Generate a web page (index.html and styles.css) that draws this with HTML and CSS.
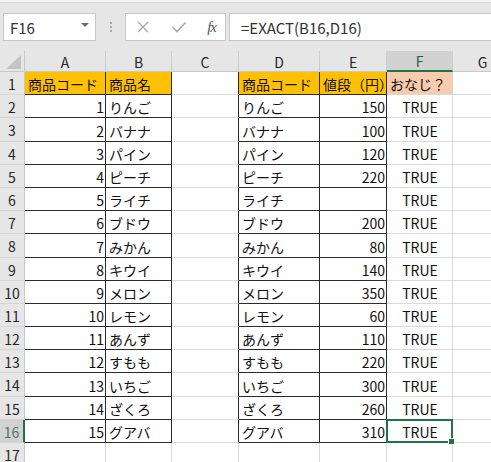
FILE: index.html
```html
<!DOCTYPE html>
<html lang="ja">
<head>
<meta charset="utf-8">
<link rel="stylesheet" href="styles.css">
</head>
<body>
<div class="app">
  <div class="edge"></div>
  <div class="fbar">
    <div class="namebox"><span class="ref">F16</span><span class="caret"></span></div>
    <div class="dots"><i></i><i></i><i></i></div>
    <div class="fbtns">
      <svg class="ico" width="14" height="14" viewBox="0 0 14 14"><path d="M2 2 L12 12 M12 2 L2 12" stroke="#a8a8a8" stroke-width="1.3" fill="none"/></svg>
      <svg class="ico" width="16" height="14" viewBox="0 0 16 14"><path d="M1.5 7 L6 11.5 L14.5 2.5" stroke="#a8a8a8" stroke-width="1.6" fill="none"/></svg>
      <span class="fx">fx</span>
    </div>
    <div class="finput">=EXACT(B16,D16)</div>
  </div>
  <div class="sheet">
    <div class="corner"><span class="tri"></span></div>
    <div class="ch">A</div><div class="ch">B</div><div class="ch">C</div><div class="ch">D</div><div class="ch">E</div><div class="ch sel">F</div><div class="ch">G</div>

    <div class="rh">1</div><div class="c org bk-r bk-b">商品コード</div><div class="c org bk-r bk-b">商品名</div><div class="c bk-r"></div><div class="c org bk-r bk-b">商品コード</div><div class="c org bk-r bk-b">値段（円）</div><div class="c pch">おなじ？</div><div class="c"></div>
    <div class="rh">2</div><div class="c num bk-r bk-b">1</div><div class="c bk-r bk-b">りんご</div><div class="c bk-r"></div><div class="c bk-r bk-b">りんご</div><div class="c num bk-r bk-b">150</div><div class="c ctr">TRUE</div><div class="c"></div>
    <div class="rh">3</div><div class="c num bk-r bk-b">2</div><div class="c bk-r bk-b">バナナ</div><div class="c bk-r"></div><div class="c bk-r bk-b">バナナ</div><div class="c num bk-r bk-b">100</div><div class="c ctr">TRUE</div><div class="c"></div>
    <div class="rh">4</div><div class="c num bk-r bk-b">3</div><div class="c bk-r bk-b">パイン</div><div class="c bk-r"></div><div class="c bk-r bk-b">パイン</div><div class="c num bk-r bk-b">120</div><div class="c ctr">TRUE</div><div class="c"></div>
    <div class="rh">5</div><div class="c num bk-r bk-b">4</div><div class="c bk-r bk-b">ピーチ</div><div class="c bk-r"></div><div class="c bk-r bk-b">ピーチ</div><div class="c num bk-r bk-b">220</div><div class="c ctr">TRUE</div><div class="c"></div>
    <div class="rh">6</div><div class="c num bk-r bk-b">5</div><div class="c bk-r bk-b">ライチ</div><div class="c bk-r"></div><div class="c bk-r bk-b">ライチ</div><div class="c num bk-r bk-b"></div><div class="c ctr">TRUE</div><div class="c"></div>
    <div class="rh">7</div><div class="c num bk-r bk-b">6</div><div class="c bk-r bk-b">ブドウ</div><div class="c bk-r"></div><div class="c bk-r bk-b">ブドウ</div><div class="c num bk-r bk-b">200</div><div class="c ctr">TRUE</div><div class="c"></div>
    <div class="rh">8</div><div class="c num bk-r bk-b">7</div><div class="c bk-r bk-b">みかん</div><div class="c bk-r"></div><div class="c bk-r bk-b">みかん</div><div class="c num bk-r bk-b">80</div><div class="c ctr">TRUE</div><div class="c"></div>
    <div class="rh">9</div><div class="c num bk-r bk-b">8</div><div class="c bk-r bk-b">キウイ</div><div class="c bk-r"></div><div class="c bk-r bk-b">キウイ</div><div class="c num bk-r bk-b">140</div><div class="c ctr">TRUE</div><div class="c"></div>
    <div class="rh">10</div><div class="c num bk-r bk-b">9</div><div class="c bk-r bk-b">メロン</div><div class="c bk-r"></div><div class="c bk-r bk-b">メロン</div><div class="c num bk-r bk-b">350</div><div class="c ctr">TRUE</div><div class="c"></div>
    <div class="rh">11</div><div class="c num bk-r bk-b">10</div><div class="c bk-r bk-b">レモン</div><div class="c bk-r"></div><div class="c bk-r bk-b">レモン</div><div class="c num bk-r bk-b">60</div><div class="c ctr">TRUE</div><div class="c"></div>
    <div class="rh">12</div><div class="c num bk-r bk-b">11</div><div class="c bk-r bk-b">あんず</div><div class="c bk-r"></div><div class="c bk-r bk-b">あんず</div><div class="c num bk-r bk-b">110</div><div class="c ctr">TRUE</div><div class="c"></div>
    <div class="rh">13</div><div class="c num bk-r bk-b">12</div><div class="c bk-r bk-b">すもも</div><div class="c bk-r"></div><div class="c bk-r bk-b">すもも</div><div class="c num bk-r bk-b">220</div><div class="c ctr">TRUE</div><div class="c"></div>
    <div class="rh">14</div><div class="c num bk-r bk-b">13</div><div class="c bk-r bk-b">いちご</div><div class="c bk-r"></div><div class="c bk-r bk-b">いちご</div><div class="c num bk-r bk-b">300</div><div class="c ctr">TRUE</div><div class="c"></div>
    <div class="rh">15</div><div class="c num bk-r bk-b">14</div><div class="c bk-r bk-b">ざくろ</div><div class="c bk-r"></div><div class="c bk-r bk-b">ざくろ</div><div class="c num bk-r bk-b">260</div><div class="c ctr">TRUE</div><div class="c"></div>
    <div class="rh sel">16</div><div class="c num bk-r bk-b">15</div><div class="c bk-r bk-b">グアバ</div><div class="c bk-r"></div><div class="c bk-r bk-b">グアバ</div><div class="c num bk-r bk-b">310</div><div class="c ctr active">TRUE<span class="selbox"><span class="handle"></span></span></div><div class="c"></div>
    <div class="rh">17</div><div class="c"></div><div class="c"></div><div class="c"></div><div class="c"></div><div class="c"></div><div class="c"></div><div class="c"></div>
  </div>
</div>
</body>
</html>
```
FILE: styles.css
```css
html, body {
  margin: 0;
  padding: 0;
  background: #ffffff;
}
body {
  font-family: "Noto Sans CJK JP", "Noto Sans", sans-serif;
  color: #000;
  overflow: hidden;
}
.app {
  width: 491px;
  height: 462px;
  overflow: hidden;
}
.edge {
  height: 3px;
  background: #f3f3f3;
  border-bottom: 1px solid #d6d6d6;
  box-sizing: border-box;
}
.fbar {
  height: 48px;
  background: #e6e6e6;
  display: flex;
  align-items: flex-start;
  padding: 10px 0 0 3px;
  box-sizing: border-box;
}
.namebox {
  width: 93px;
  height: 28px;
  box-sizing: border-box;
  background: #fff;
  border: 1px solid #c6c6c6;
  display: flex;
  align-items: center;
  justify-content: space-between;
  padding: 0 6px 0 6px;
  font-size: 15px;
  color: #333;
}
.caret {
  width: 0;
  height: 0;
  border-left: 4px solid transparent;
  border-right: 4px solid transparent;
  border-top: 4px solid #6a6a6a;
  margin-top: -4px;
}
.dots {
  width: 29px;
  height: 28px;
  display: flex;
  flex-direction: column;
  align-items: center;
  justify-content: center;
  gap: 2px;
}
.dots i {
  width: 2px;
  height: 2px;
  background: #a8a8a8;
  display: block;
}
.fbtns {
  width: 101px;
  height: 28px;
  box-sizing: border-box;
  background: #fff;
  border: 1px solid #c6c6c6;
  display: flex;
  align-items: center;
  justify-content: space-between;
  padding: 0 9px 0 10px;
}
.fx {
  font-family: "Liberation Serif", serif;
  font-style: italic;
  font-size: 15px;
  color: #555;
  letter-spacing: -1px;
}
.finput {
  flex: 1;
  height: 28px;
  box-sizing: border-box;
  background: #fff;
  border: 1px solid #c6c6c6;
  border-right: none;
  margin-left: 3px;
  display: flex;
  align-items: center;
  padding-left: 11px;
  font-size: 15px;
  color: #333;
}
.sheet {
  display: grid;
  grid-template-columns: 25px 81px 66px 67px 81px 67px 66px 60px;
  grid-template-rows: 21px 23px 23px 24px 23px 23px 23px 23px 24px 23px 23px 23px 23px 23px 24px 23px 23px 23px;
  background: #fff;
}
.corner {
  background: #e6e6e6;
  border-right: 1px solid #c8c8c8;
  border-bottom: 1px solid #c8c8c8;
  box-sizing: border-box;
  position: relative;
}
.tri {
  position: absolute;
  right: 3px;
  bottom: 2px;
  width: 15px;
  height: 14px;
  background: #c4c4c4;
  clip-path: polygon(100% 0, 100% 100%, 0 100%);
}
.ch {
  background: #e6e6e6;
  border-right: 1px solid #cdcdcd;
  border-bottom: 1px solid #c8c8c8;
  box-sizing: border-box;
  display: flex;
  align-items: center;
  justify-content: center;
  font-size: 14px;
  color: #262626;
  padding-top: 1px;
}
.ch.sel {
  background: #d2d2d2;
  border-bottom: 2px solid #217346;
  color: #1d5e3a;
}
.rh {
  background: #e6e6e6;
  border-right: 1px solid #c8c8c8;
  border-bottom: 1px solid #d4d4d4;
  box-sizing: border-box;
  display: flex;
  align-items: center;
  justify-content: center;
  font-size: 14px;
  color: #262626;
  padding-top: 1px;
}
.rh.sel {
  background: #d2d2d2;
  border-right: 2px solid #217346;
  color: #4f7560;
}
.c {
  border-right: 1px solid #dadada;
  border-bottom: 1px solid #dadada;
  box-sizing: border-box;
  display: flex;
  align-items: center;
  padding: 2px 2px 0 3px;
  font-size: 14px;
  white-space: nowrap;
  overflow: hidden;
  color: #111;
}
.num {
  justify-content: flex-end;
  padding-right: 1px;
}
.ctr {
  justify-content: center;
}
.bk-r {
  border-right-color: #2a2a2a;
}
.bk-b {
  border-bottom-color: #2a2a2a;
}
.org {
  background: #ffc000;
}
.pch {
  background: #f8cbad;
}
.active {
  position: relative;
  overflow: visible;
}
.selbox {
  position: absolute;
  left: -1px;
  top: -1px;
  right: -1px;
  bottom: -1px;
  border: 2px solid #217346;
  pointer-events: none;
}
.handle {
  position: absolute;
  right: -4px;
  bottom: -4px;
  width: 5px;
  height: 5px;
  background: #217346;
  border: 1px solid #fff;
}
```
